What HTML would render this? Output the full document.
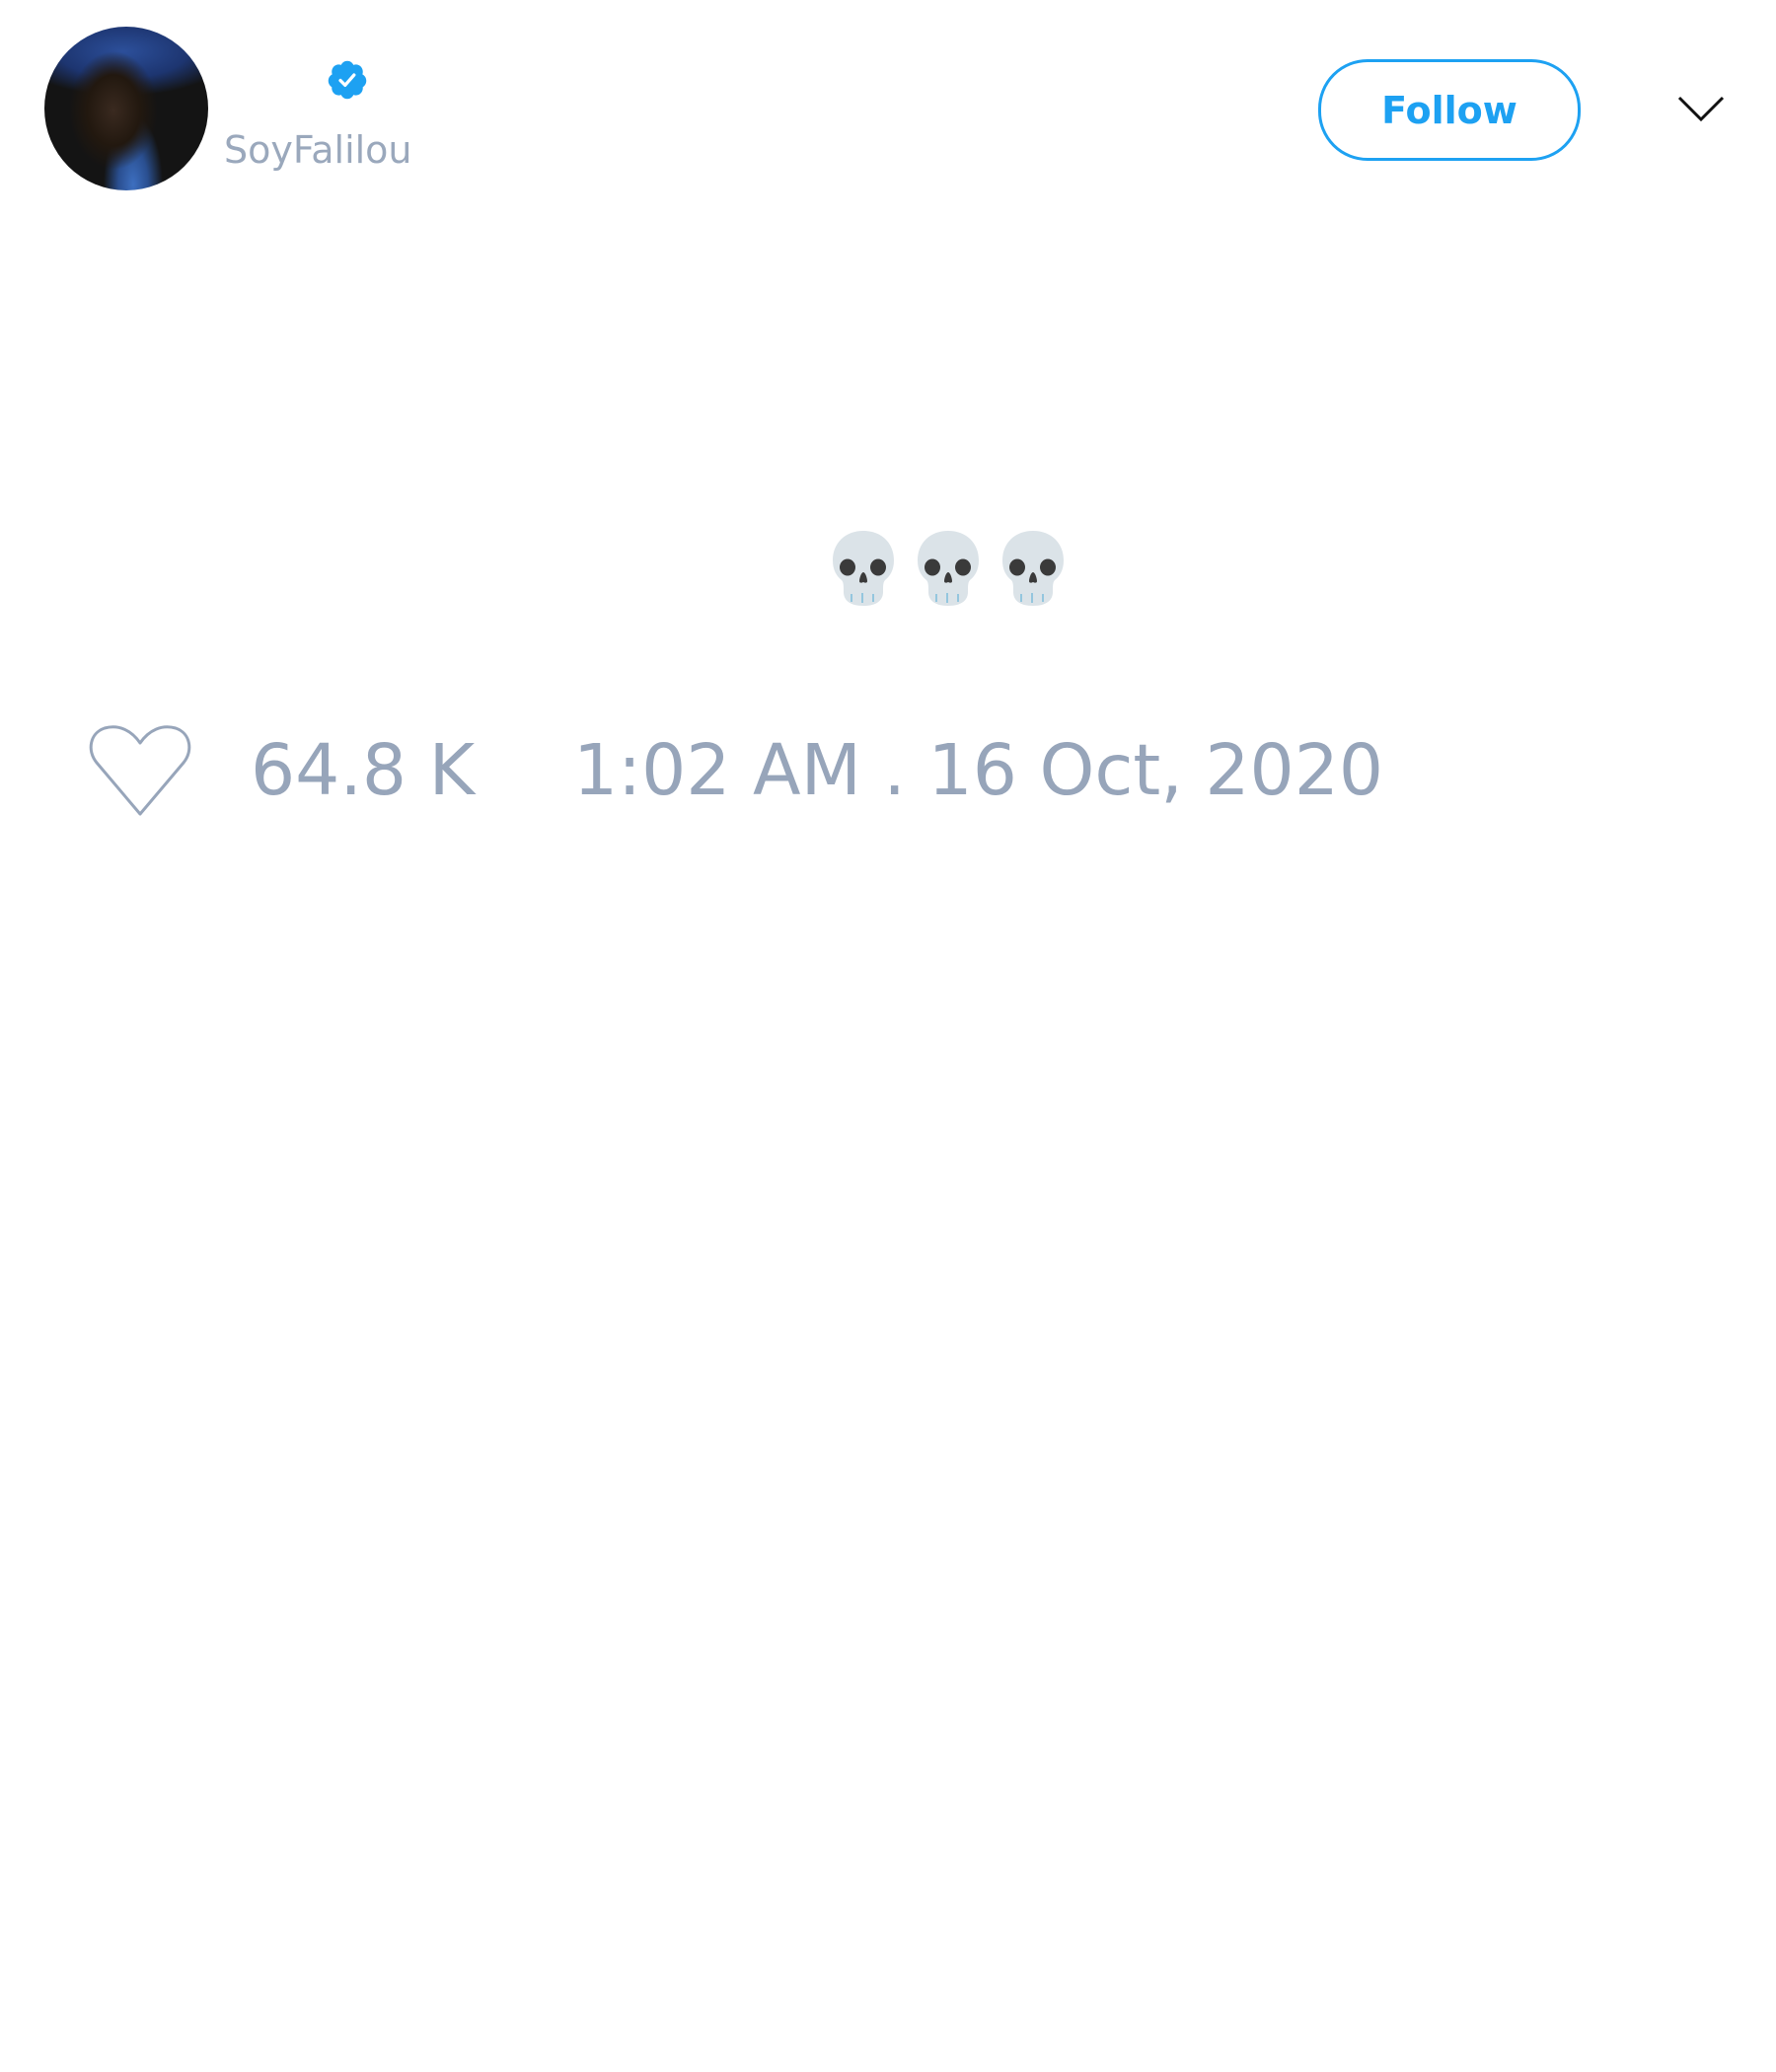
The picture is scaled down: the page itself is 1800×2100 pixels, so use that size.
<!DOCTYPE html>
<html><head><meta charset="utf-8"><style>
html,body{margin:0;padding:0;background:#fff;width:1800px;height:2100px;overflow:hidden;font-family:"DejaVu Sans","Liberation Sans",sans-serif;}
.abs{position:absolute}
.avatar{left:45px;top:27px;width:166px;height:166px;border-radius:50%;overflow:hidden;
background:radial-gradient(ellipse 45px 60px at 70px 85px,#3a2a20 0%,#22180f 60%,transparent 100%),
radial-gradient(ellipse 30px 70px at 90px 160px,#3d6fc0 0%,#2a4f90 50%,transparent 100%),
radial-gradient(ellipse 110px 45px at 80px 25px,#2c4f9a 0%,#1d3570 60%,transparent 100%),#141414;}
.name{left:227px;top:124px;font-size:38px;color:#9aa8bc;line-height:56px}
.follow{left:1336px;top:60px;width:260px;height:97px;border:3px solid #1da1f2;border-radius:50px;color:#1da1f2;font-weight:bold;font-size:38px;display:flex;align-items:center;justify-content:center;box-sizing:content-box}
.stat{top:726px;font-size:71px;color:#97a5ba;line-height:110px;white-space:pre}
</style></head><body>
<div class="abs avatar"></div>
<svg class="abs" style="left:330px;top:59px" width="44" height="44" viewBox="0 0 24 24">
<path fill="#1da1f2" d="M22.5 12.5c0-1.58-.875-2.95-2.148-3.6.154-.435.238-.905.238-1.4 0-2.210-1.71-3.998-3.818-3.998-.47 0-.92.084-1.336.25C14.818 2.415 13.51 1.5 12 1.5s-2.816.917-3.437 2.25c-.415-.165-.866-.25-1.336-.25-2.110 0-3.818 1.790-3.818 4 0 .494.083.964.237 1.4-1.272.65-2.147 2.018-2.147 3.6 0 1.495.782 2.798 1.942 3.486-.02.17-.032.34-.032.514 0 2.210 1.708 4 3.818 4 .47 0 .92-.086 1.335-.25.62 1.334 1.926 2.25 3.437 2.25 1.512 0 2.818-.916 3.437-2.25.415.163.865.248 1.336.248 2.110 0 3.818-1.790 3.818-4 0-.174-.012-.344-.033-.513 1.158-.687 1.943-1.990 1.943-3.484z"/>
<path fill="none" stroke="#fff" stroke-width="1.8" stroke-linecap="round" stroke-linejoin="round" d="M8.2 12.3l2.6 2.6 4.9-5.6"/>
</svg>
<div class="abs name">SoyFalilou</div>
<div class="abs follow">Follow</div>
<svg class="abs" style="left:1700px;top:96px" width="48" height="30" viewBox="0 0 48 30"><path d="M2 3 L24 25 L46 3" fill="none" stroke="#111" stroke-width="3"/></svg>

<svg class="abs" style="left:843px;top:538px" width="250" height="78" viewBox="0 0 250 78">
<defs><g id="sk">
<path fill="#dbe3e8" d="M32 0C14 0 1 12 1 30c0 10 4 16 9 20 2 2 2 6 2 12 0 8 6 14 20 14s20-6 20-14c0-6 0-10 2-12 5-4 9-10 9-20C63 12 50 0 32 0z"/>
<ellipse cx="16" cy="37" rx="8" ry="8.5" fill="#3a3a3a"/>
<ellipse cx="47" cy="37" rx="8" ry="8.5" fill="#3a3a3a"/>
<path fill="#3a3a3a" d="M32 42c-2 0-4 6-4 9 0 2 2 2 4 1 2 1 4 1 4-1 0-3-2-9-4-9z"/>
<path stroke="#8cc3dc" stroke-width="1.8" fill="none" d="M20 64v8M31 63v10M42 64v8"/>
</g></defs>
<use href="#sk" x="0"/><use href="#sk" x="86"/><use href="#sk" x="172"/>
</svg>

<svg class="abs" style="left:88px;top:735px" width="110" height="95" viewBox="0 0 110 95">
<path d="M54 90 L10 38 C0 26 3 8 18 3 C32 -1 45 5 54 18 C63 5 76 -1 90 3 C105 8 108 26 98 38 Z" fill="none" stroke="#97a5ba" stroke-width="3" stroke-linejoin="round"/>
</svg>
<div class="abs stat" style="left:254px">64.8 K</div>
<div class="abs stat" style="left:581px">1:02 AM . 16 Oct, 2020</div>
</body></html>
